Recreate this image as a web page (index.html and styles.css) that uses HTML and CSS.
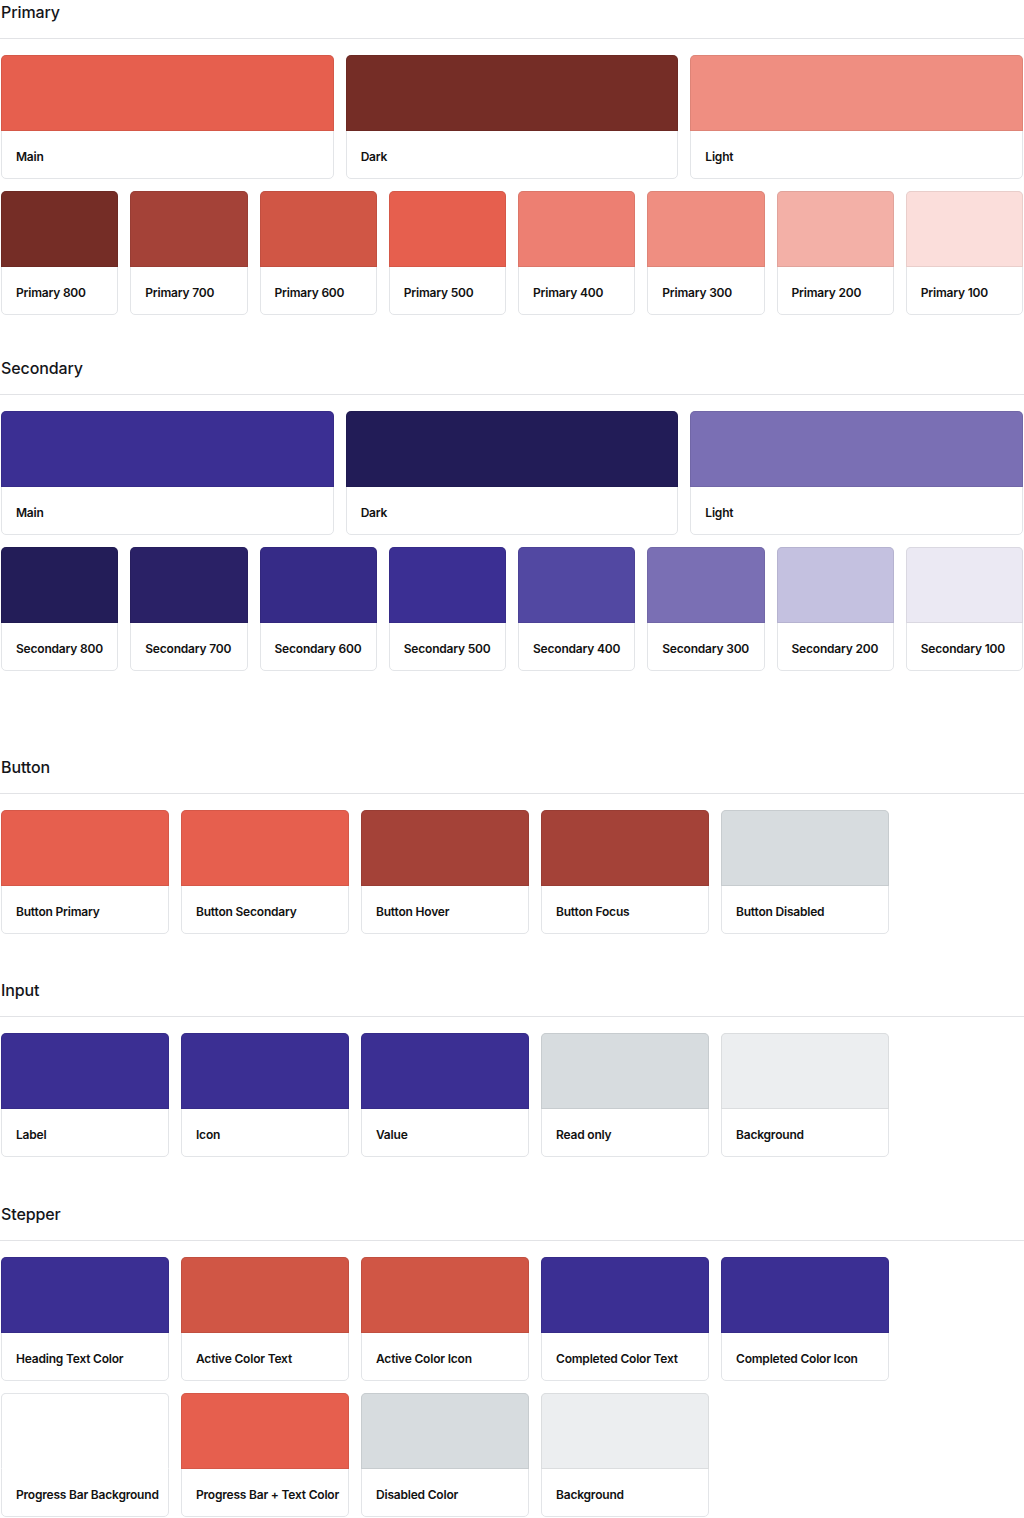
FILE: index.html
```html
<!DOCTYPE html>
<html lang="en">
<head>
<meta charset="utf-8">
<title>Colors</title>
<link rel="stylesheet" href="styles.css">
</head>
<body>
<main class="page">
  <section class="section">
    <h2 class="section-title">Primary</h2>
    <div class="grid grid-3">
      <div class="card"><div class="swatch" style="background:#E65F4E"></div><div class="label">Main</div></div>
      <div class="card"><div class="swatch" style="background:#752D26"></div><div class="label">Dark</div></div>
      <div class="card"><div class="swatch" style="background:#EF8E81"></div><div class="label">Light</div></div>
    </div>
    <div class="grid grid-8">
      <div class="card"><div class="swatch" style="background:#752D26"></div><div class="label">Primary 800</div></div>
      <div class="card"><div class="swatch" style="background:#A44238"></div><div class="label">Primary 700</div></div>
      <div class="card"><div class="swatch" style="background:#D05645"></div><div class="label">Primary 600</div></div>
      <div class="card"><div class="swatch" style="background:#E65F4E"></div><div class="label">Primary 500</div></div>
      <div class="card"><div class="swatch" style="background:#ED7F72"></div><div class="label">Primary 400</div></div>
      <div class="card"><div class="swatch" style="background:#EF8E81"></div><div class="label">Primary 300</div></div>
      <div class="card"><div class="swatch" style="background:#F3B0A7"></div><div class="label">Primary 200</div></div>
      <div class="card"><div class="swatch" style="background:#FBDEDB"></div><div class="label">Primary 100</div></div>
    </div>
  </section>

  <section class="section section-secondary">
    <h2 class="section-title">Secondary</h2>
    <div class="grid grid-3">
      <div class="card"><div class="swatch" style="background:#3B2F93"></div><div class="label">Main</div></div>
      <div class="card"><div class="swatch" style="background:#221C57"></div><div class="label">Dark</div></div>
      <div class="card"><div class="swatch" style="background:#7A6FB4"></div><div class="label">Light</div></div>
    </div>
    <div class="grid grid-8">
      <div class="card"><div class="swatch" style="background:#231D58"></div><div class="label">Secondary 800</div></div>
      <div class="card"><div class="swatch" style="background:#2A2166"></div><div class="label">Secondary 700</div></div>
      <div class="card"><div class="swatch" style="background:#362B87"></div><div class="label">Secondary 600</div></div>
      <div class="card"><div class="swatch" style="background:#3B2F93"></div><div class="label">Secondary 500</div></div>
      <div class="card"><div class="swatch" style="background:#5248A2"></div><div class="label">Secondary 400</div></div>
      <div class="card"><div class="swatch" style="background:#7A6FB4"></div><div class="label">Secondary 300</div></div>
      <div class="card"><div class="swatch" style="background:#C4C1E0"></div><div class="label">Secondary 200</div></div>
      <div class="card"><div class="swatch" style="background:#EBE9F3"></div><div class="label">Secondary 100</div></div>
    </div>
  </section>

  <section class="section section-button">
    <h2 class="section-title">Button</h2>
    <div class="grid grid-5">
      <div class="card"><div class="swatch" style="background:#E65F4E"></div><div class="label">Button Primary</div></div>
      <div class="card"><div class="swatch" style="background:#E65F4E"></div><div class="label">Button Secondary</div></div>
      <div class="card"><div class="swatch" style="background:#A44238"></div><div class="label">Button Hover</div></div>
      <div class="card"><div class="swatch" style="background:#A44238"></div><div class="label">Button Focus</div></div>
      <div class="card"><div class="swatch" style="background:#D7DCDF"></div><div class="label">Button Disabled</div></div>
    </div>
  </section>

  <section class="section section-input">
    <h2 class="section-title">Input</h2>
    <div class="grid grid-5">
      <div class="card"><div class="swatch" style="background:#3B2F93"></div><div class="label">Label</div></div>
      <div class="card"><div class="swatch" style="background:#3B2F93"></div><div class="label">Icon</div></div>
      <div class="card"><div class="swatch" style="background:#3B2F93"></div><div class="label">Value</div></div>
      <div class="card"><div class="swatch" style="background:#D7DCDF"></div><div class="label">Read only</div></div>
      <div class="card"><div class="swatch" style="background:#ECEEF0"></div><div class="label">Background</div></div>
    </div>
  </section>

  <section class="section section-stepper">
    <h2 class="section-title">Stepper</h2>
    <div class="grid grid-5">
      <div class="card"><div class="swatch" style="background:#3B2F93"></div><div class="label">Heading Text Color</div></div>
      <div class="card"><div class="swatch" style="background:#D05645"></div><div class="label">Active Color Text</div></div>
      <div class="card"><div class="swatch" style="background:#D05645"></div><div class="label">Active Color Icon</div></div>
      <div class="card"><div class="swatch" style="background:#3B2F93"></div><div class="label">Completed Color Text</div></div>
      <div class="card"><div class="swatch" style="background:#3B2F93"></div><div class="label">Completed Color Icon</div></div>
    </div>
    <div class="grid grid-5">
      <div class="card"><div class="swatch swatch-white" style="background:#FFFFFF"></div><div class="label">Progress Bar Background</div></div>
      <div class="card"><div class="swatch" style="background:#E65F4E"></div><div class="label">Progress Bar + Text Color</div></div>
      <div class="card"><div class="swatch" style="background:#D7DCDF"></div><div class="label">Disabled Color</div></div>
      <div class="card"><div class="swatch" style="background:#ECEEF0"></div><div class="label">Background</div></div>
    </div>
  </section>
</main>
</body>
</html>
```

FILE: styles.css
```css
* {
  box-sizing: border-box;
}

html, body {
  margin: 0;
  padding: 0;
  background: #ffffff;
}

body {
  font-family: Inter, "Noto Sans", "Liberation Sans", sans-serif;
  color: #111111;
}

.page {
  padding: 0 1px;
  width: 1024px;
}

.section-secondary {
  margin-top: 41px;
}

.section-button {
  margin-top: 84px;
}

.section-input {
  margin-top: 44px;
}

.section-stepper {
  margin-top: 45px;
}

.section-title {
  margin: 0 -1px 16px;
  padding: 0 0 14px 1px;
  font-size: 16px;
  line-height: 24px;
  font-weight: 500;
  color: #141519;
  letter-spacing: -0.1px;
  border-bottom: 1px solid #e2e3e6;
}

.grid {
  display: grid;
  gap: 12px;
}

.grid + .grid {
  margin-top: 12px;
}

.grid-3 {
  grid-template-columns: repeat(3, minmax(0, 1fr));
}

.grid-8 {
  grid-template-columns: repeat(8, minmax(0, 1fr));
}

.grid-5 {
  grid-template-columns: repeat(5, 168px);
}

.card {
  border: 1px solid #e3e5e8;
  border-radius: 5px;
  background: #ffffff;
  display: flex;
  flex-direction: column;
  min-width: 0;
}

.swatch {
  height: 76px;
  margin: -1px -1px 0;
  border: 1px solid rgba(0, 0, 0, 0.07);
  border-radius: 5px 5px 0 0;
}

.swatch-white {
  border-color: #e3e5e8 #e3e5e8 transparent;
}

.label {
  height: 47px;
  display: flex;
  align-items: center;
  padding: 3px 8px 0 14px;
  font-size: 12px;
  font-weight: 600;
  color: #111111;
  white-space: nowrap;
  letter-spacing: -0.2px;
}
```
